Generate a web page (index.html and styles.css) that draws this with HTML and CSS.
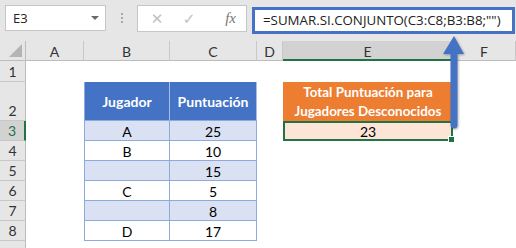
FILE: index.html
```
<!DOCTYPE html>
<html lang="es">
<head>
    <meta charset="UTF-8">
    <title>SUMAR.SI.CONJUNTO</title>
    <link rel="stylesheet" href="styles.css">
</head>
<body>
    <div class="toolbar">
        <div class="namebox">
            <span>E3</span>
            <span class="caret"></span>
        </div>
        <div class="grip"><i></i><i></i><i></i></div>
        <div class="fxbox">
            <span class="tool">&#x2715;</span>
            <span class="tool check">&#x2713;</span>
            <span class="fx">fx</span>
        </div>
        <div class="formula">=SUMAR.SI.CONJUNTO(C3:C8;B3:B8;"")</div>
    </div>

    <div class="sheet">
        <!-- column headers -->
        <div class="corner"><span class="corner-tri"></span></div>
        <div class="colhead">A</div>
        <div class="colhead">B</div>
        <div class="colhead">C</div>
        <div class="colhead">D</div>
        <div class="colhead active">E</div>
        <div class="colhead">F</div>

        <!-- row 1 -->
        <div class="rowhead">1</div>
        <div class="cell"></div><div class="cell"></div><div class="cell"></div>
        <div class="cell"></div><div class="cell"></div><div class="cell"></div>

        <!-- row 2 -->
        <div class="rowhead">2</div>
        <div class="cell"></div>
        <div class="cell th first">Jugador</div>
        <div class="cell th">Puntuación</div>
        <div class="cell"></div>
        <div class="cell total-head">Total Puntuación para Jugadores Desconocidos</div>
        <div class="cell"></div>

        <!-- row 3 -->
        <div class="rowhead active">3</div>
        <div class="cell"></div>
        <div class="cell td band first">A</div>
        <div class="cell td band">25</div>
        <div class="cell"></div>
        <div class="cell result">23<span class="handle"></span></div>
        <div class="cell"></div>

        <!-- row 4 -->
        <div class="rowhead">4</div>
        <div class="cell"></div>
        <div class="cell td first">B</div>
        <div class="cell td">10</div>
        <div class="cell"></div><div class="cell"></div><div class="cell"></div>

        <!-- row 5 -->
        <div class="rowhead">5</div>
        <div class="cell"></div>
        <div class="cell td band first"></div>
        <div class="cell td band">15</div>
        <div class="cell"></div><div class="cell"></div><div class="cell"></div>

        <!-- row 6 -->
        <div class="rowhead">6</div>
        <div class="cell"></div>
        <div class="cell td first">C</div>
        <div class="cell td">5</div>
        <div class="cell"></div><div class="cell"></div><div class="cell"></div>

        <!-- row 7 -->
        <div class="rowhead">7</div>
        <div class="cell"></div>
        <div class="cell td band first"></div>
        <div class="cell td band">8</div>
        <div class="cell"></div><div class="cell"></div><div class="cell"></div>

        <!-- row 8 -->
        <div class="rowhead">8</div>
        <div class="cell"></div>
        <div class="cell td first">D</div>
        <div class="cell td">17</div>
        <div class="cell"></div><div class="cell"></div><div class="cell"></div>

        <!-- row 9, only its top edge is visible -->
        <div class="rowhead"></div>
        <div class="cell"></div><div class="cell"></div><div class="cell"></div>
        <div class="cell"></div><div class="cell"></div><div class="cell"></div>
    </div>

    <svg class="arrow" width="30" height="100" viewBox="0 0 30 100">
        <path d="M13.5 18 L13.5 89 A3.5 3.5 0 0 0 20.5 89 L20.5 18 L27 18 L17 0 L6 18 Z" fill="#4472c4"/>
    </svg>
</body>
</html>
```

FILE: styles.css
```
body {
    margin: 0;
    width: 516px;
    height: 248px;
    overflow: hidden;
    background: #fff;
    font-family: Lato, "Open Sans", sans-serif;
    position: relative;
}

/* formula bar */
.toolbar {
    display: flex;
    align-items: flex-start;
    height: 41px;
    box-sizing: border-box;
    padding: 5px 1px 0 5px;
    background: #e6e6e6;
}
.namebox {
    width: 101px;
    height: 26px;
    box-sizing: border-box;
    background: #fff;
    border: 1px solid #c6c6c6;
    display: flex;
    align-items: center;
    justify-content: space-between;
    padding: 0 6px 0 7px;
    font-family: "Open Sans", sans-serif;
    font-size: 13px;
    color: #222;
}
.caret {
    width: 0;
    height: 0;
    border-left: 4px solid transparent;
    border-right: 4px solid transparent;
    border-top: 4px solid #6a6a6a;
}
.grip {
    width: 31px;
    height: 26px;
    display: flex;
    flex-direction: column;
    align-items: center;
    justify-content: center;
    gap: 2px;
}
.grip i {
    width: 2px;
    height: 2px;
    background: #a8a8a8;
}
.fxbox {
    width: 110px;
    height: 27px;
    box-sizing: border-box;
    background: #fff;
    border: 1px solid #c6c6c6;
    display: flex;
    align-items: center;
    padding: 0 10px 0 12px;
    gap: 18px;
    color: #c0c0c0;
    font-size: 15px;
}
.tool {
    font-family: "DejaVu Sans", sans-serif;
    width: 14px;
    text-align: center;
}
.fx {
    margin-left: auto;
    font-family: "Liberation Serif", serif;
    font-style: italic;
    font-size: 15px;
    color: #777;
}
.formula {
    flex: 1;
    margin: 2px 0 0 5px;
    height: 27px;
    box-sizing: border-box;
    background: #fff;
    border: 3px solid #4472c4;
    padding: 0 0 0 8px;
    font-family: "Open Sans", sans-serif;
    font-size: 13.3px;
    line-height: 21px;
    color: #222;
    white-space: nowrap;
}

/* grid */
.sheet {
    display: grid;
    grid-template-columns: 26px 58px 86px 87px 26px 170px 1fr;
    grid-template-rows: 20px 21px 39px repeat(7, 20px);
}
.corner, .colhead, .rowhead {
    background: #e6e6e6;
    box-sizing: border-box;
    color: #333;
    font-size: 14px;
}
.corner {
    border-right: 1px solid #bcbcbc;
    border-bottom: 1px solid #bcbcbc;
    position: relative;
}
.corner-tri {
    position: absolute;
    right: 3px;
    bottom: 3px;
    width: 0;
    height: 0;
    border-left: 13px solid transparent;
    border-bottom: 13px solid #b4b4b4;
}
.colhead {
    border-right: 1px solid #c8c8c8;
    border-bottom: 1px solid #bcbcbc;
    text-align: center;
    line-height: 20px;
    padding-top: 1px;
}
.colhead.active {
    background: #d2d2d2;
    border-bottom: 2px solid #217346;
}
.rowhead {
    border-right: 1px solid #bcbcbc;
    border-bottom: 1px solid #c8c8c8;
    display: flex;
    align-items: flex-end;
    justify-content: center;
    line-height: 19px;
}
.rowhead.active {
    background: #d2d2d2;
    border-right: 2px solid #217346;
    color: #217346;
}
.cell {
    box-sizing: border-box;
    font-size: 14px;
    color: #000;
    display: flex;
    align-items: center;
    justify-content: center;
    text-align: center;
    padding-top: 1px;
}

/* data table */
.th, .td {
    border-right: 1px solid #8ea9db;
    border-bottom: 1px solid #8ea9db;
}
.first {
    border-left: 1px solid #8ea9db;
}
.th {
    background: #4472c4;
    color: #fff;
    font-weight: bold;
    border-right-color: #a9bde6;
}
.th:last-child {
    border-right-color: #8ea9db;
}
.band {
    background: #d9e1f2;
}

/* result */
.total-head {
    background: #ed7d31;
    color: #fff;
    font-weight: bold;
    font-size: 13.4px;
    line-height: 19px;
    padding: 0 6px;
}
.result {
    background: #fce4d6;
    border: 2px solid #217346;
    position: relative;
}
.handle {
    position: absolute;
    right: -4px;
    bottom: -4px;
    width: 5px;
    height: 5px;
    background: #217346;
    border: 1px solid #fff;
}

.arrow {
    position: absolute;
    left: 437px;
    top: 36px;
    filter: drop-shadow(1px 1px 1px rgba(0, 0, 0, 0.3));
}
```
